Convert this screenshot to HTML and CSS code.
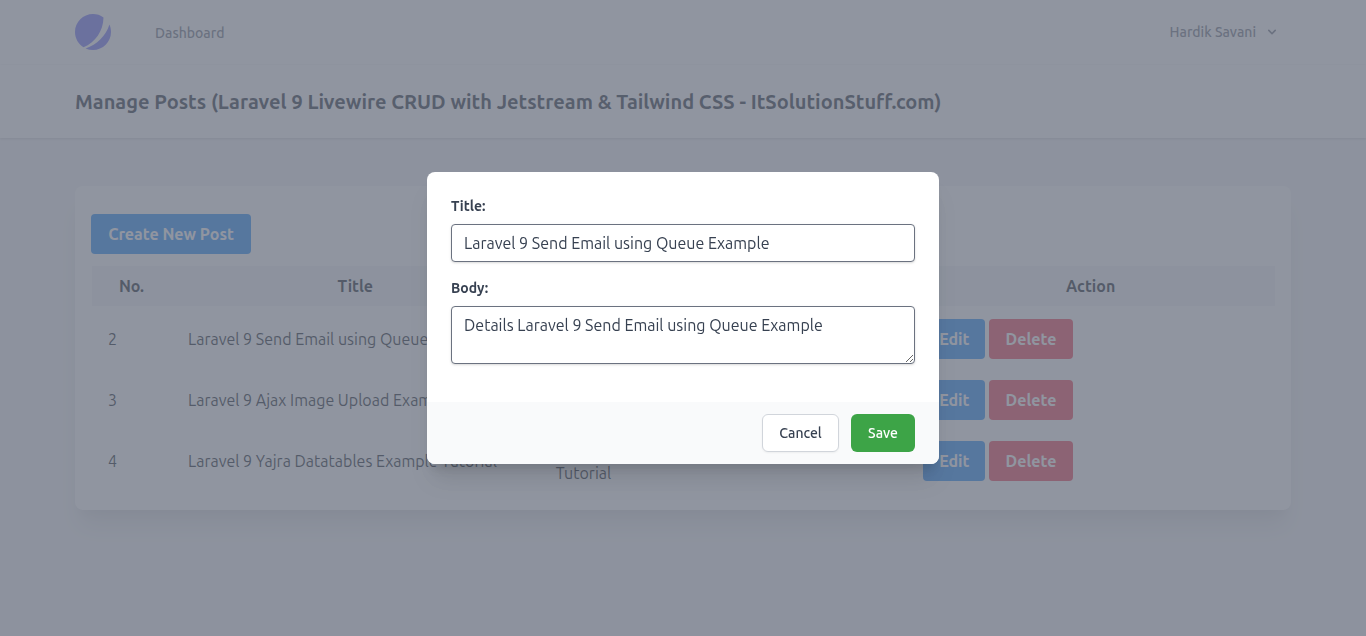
FILE: index.html
```html
<!DOCTYPE html>
<html lang="en">
<head>
    <meta charset="UTF-8">
    <meta name="viewport" content="width=device-width, initial-scale=1.0">
    <title>Manage Posts</title>
    <link rel="stylesheet" href="styles.css">
</head>
<body>
    <nav class="navbar">
        <div class="container navbar-inner">
            <a href="#" class="logo" aria-label="Home">
                <svg width="36" height="36" viewBox="0 0 48 48" fill="#6d70f8">
                    <path d="M11.395 44.428C4.557 40.198 0 32.632 0 24 0 10.745 10.745 0 24 0a23.891 23.891 0 0113.997 4.502c-.2 17.907-11.097 33.245-26.602 39.926z"/>
                    <path d="M14.134 45.885A23.914 23.914 0 0024 48c13.255 0 24-10.745 24-24 0-3.516-.756-6.856-2.115-9.866-4.659 15.143-16.608 27.092-31.75 31.751z"/>
                </svg>
            </a>
            <a href="#" class="nav-link">Dashboard</a>
            <button type="button" class="user-menu">
                Hardik Savani
                <svg width="16" height="16" viewBox="0 0 20 20" fill="currentColor">
                    <path fill-rule="evenodd" d="M5.293 7.293a1 1 0 011.414 0L10 10.586l3.293-3.293a1 1 0 111.414 1.414l-4 4a1 1 0 01-1.414 0l-4-4a1 1 0 010-1.414z" clip-rule="evenodd"/>
                </svg>
            </button>
        </div>
    </nav>

    <header class="page-header">
        <div class="container">
            <h2>Manage Posts (Laravel 9 Livewire CRUD with Jetstream &amp; Tailwind CSS - ItSolutionStuff.com)</h2>
        </div>
    </header>

    <main class="container">
        <div class="card">
            <button type="button" class="btn btn-blue btn-create">Create New Post</button>
            <table class="posts">
                <thead>
                    <tr>
                        <th class="col-no">No.</th>
                        <th>Title</th>
                        <th>Body</th>
                        <th>Action</th>
                    </tr>
                </thead>
                <tbody>
                    <tr>
                        <td>2</td>
                        <td>Laravel 9 Send Email using Queue Example</td>
                        <td>Details Laravel 9 Send Email using Queue Example</td>
                        <td>
                            <button type="button" class="btn btn-blue btn-edit">Edit</button>
                            <button type="button" class="btn btn-red btn-delete">Delete</button>
                        </td>
                    </tr>
                    <tr>
                        <td>3</td>
                        <td>Laravel 9 Ajax Image Upload Example</td>
                        <td>Laravel 9 Ajax Image Upload Example</td>
                        <td>
                            <button type="button" class="btn btn-blue btn-edit">Edit</button>
                            <button type="button" class="btn btn-red btn-delete">Delete</button>
                        </td>
                    </tr>
                    <tr>
                        <td>4</td>
                        <td>Laravel 9 Yajra Datatables Example Tutorial</td>
                        <td>Details Laravel 9 Yajra Datatables Example Tutorial</td>
                        <td>
                            <button type="button" class="btn btn-blue btn-edit">Edit</button>
                            <button type="button" class="btn btn-red btn-delete">Delete</button>
                        </td>
                    </tr>
                </tbody>
            </table>
        </div>
    </main>

    <div class="overlay">
        <form class="modal" role="dialog" aria-modal="true">
            <div class="modal-body">
                <div class="field">
                    <label for="title">Title:</label>
                    <input type="text" id="title" value="Laravel 9 Send Email using Queue Example">
                </div>
                <div class="field">
                    <label for="body">Body:</label>
                    <textarea id="body" rows="2">Details Laravel 9 Send Email using Queue Example</textarea>
                </div>
            </div>
            <div class="modal-footer">
                <button type="button" class="modal-btn btn-cancel">Cancel</button>
                <button type="button" class="modal-btn btn-save">Save</button>
            </div>
        </form>
    </div>
</body>
</html>
```
FILE: styles.css
```css
* {
    box-sizing: border-box;
}
body {
    margin: 0;
    min-height: 100vh;
    font-family: Ubuntu, "Noto Sans", sans-serif;
    font-size: 16px;
    line-height: 24px;
    color: #111827;
    background: #f3f4f6;
}
button, input, textarea {
    font-family: inherit;
}
.container {
    max-width: 1280px;
    margin: 0 auto;
    padding: 0 32px;
}

/* top bar */
.navbar {
    background: white;
    border-bottom: 1px solid #fcfcfd;
}
.navbar-inner {
    display: flex;
    align-items: center;
    height: 64px;
}
.logo {
    display: flex;
}
.nav-link {
    margin-left: 40px;
    padding: 4px 4px 0;
    border-bottom: 2px solid transparent;
    font-size: 14px;
    font-weight: 500;
    color: #6b7280;
    text-decoration: none;
}
.user-menu {
    display: flex;
    align-items: center;
    gap: 8px;
    margin-left: auto;
    padding: 8px 11px;
    border: none;
    background: white;
    font-size: 14px;
    font-weight: 500;
    color: #6b7280;
    cursor: pointer;
}
.page-header {
    padding: 24px 0;
    background: white;
    box-shadow: 0 1px 3px rgba(0,0,0,0.1), 0 1px 2px rgba(0,0,0,0.06);
}
.page-header h2 {
    margin: 0;
    font-size: 20px;
    font-weight: 700;
    line-height: 25px;
    color: #1f2937;
}

/* posts table */
.card {
    margin: 48px 0;
    padding: 16px;
    background: white;
    border-radius: 8px;
    box-shadow: 0 20px 25px -5px rgba(0,0,0,0.1), 0 10px 10px -5px rgba(0,0,0,0.04);
}
.btn {
    padding: 8px 0;
    border: none;
    border-radius: 4px;
    font-size: 16px;
    font-weight: 700;
    line-height: 24px;
    color: white;
    cursor: pointer;
}
.btn-blue {
    background: #1a86f5;
}
.btn-red {
    background: #ee3a50;
}
.btn-create {
    display: block;
    width: 160px;
    margin: 12px 0;
}
.btn-edit {
    width: 62px;
}
.btn-delete {
    width: 84px;
}
.posts {
    width: 100%;
    table-layout: fixed;
    border-collapse: collapse;
}
.posts thead tr {
    background: #f3f4f6;
}
.posts th {
    padding: 8px 16px;
    font-weight: 700;
}
.posts td {
    padding: 8px 16px;
    border: 1px solid #fdfdfe;
}
.posts .col-no {
    width: 80px;
}

/* edit dialog */
.overlay {
    position: fixed;
    inset: 0;
    display: flex;
    align-items: center;
    justify-content: center;
    background: rgba(107,114,128,0.75);
}
.modal {
    width: 100%;
    max-width: 512px;
    overflow: hidden;
    background: white;
    border-radius: 8px;
    box-shadow: 0 20px 25px -5px rgba(0,0,0,0.1), 0 10px 10px -5px rgba(0,0,0,0.1);
}
.modal-body {
    padding: 24px 24px 22px;
}
.field {
    margin-bottom: 16px;
}
.field label {
    display: block;
    margin-bottom: 8px;
    font-size: 14px;
    font-weight: 700;
    line-height: 20px;
    color: #374151;
}
.field input, .field textarea {
    display: block;
    width: 100%;
    padding: 8px 12px;
    border: 1px solid #6b7280;
    border-radius: 4px;
    background: white;
    box-shadow: 0 1px 3px rgba(0,0,0,0.1), 0 1px 2px rgba(0,0,0,0.06);
    font-size: 16px;
    line-height: 20px;
    color: #374151;
}
.field input {
    height: 38px;
}
.modal-footer {
    display: flex;
    justify-content: flex-end;
    gap: 12px;
    padding: 12px 24px;
    background: #f9fafb;
}
.modal-btn {
    height: 38px;
    border-radius: 6px;
    font-size: 14px;
    font-weight: 500;
    line-height: 20px;
    cursor: pointer;
}
.btn-cancel {
    width: 77px;
    border: 1px solid #d1d5db;
    background: white;
    box-shadow: 0 1px 2px rgba(0,0,0,0.05);
    color: #374151;
}
.btn-save {
    width: 64px;
    border: 1px solid transparent;
    background: #3da447;
    color: white;
}
```
